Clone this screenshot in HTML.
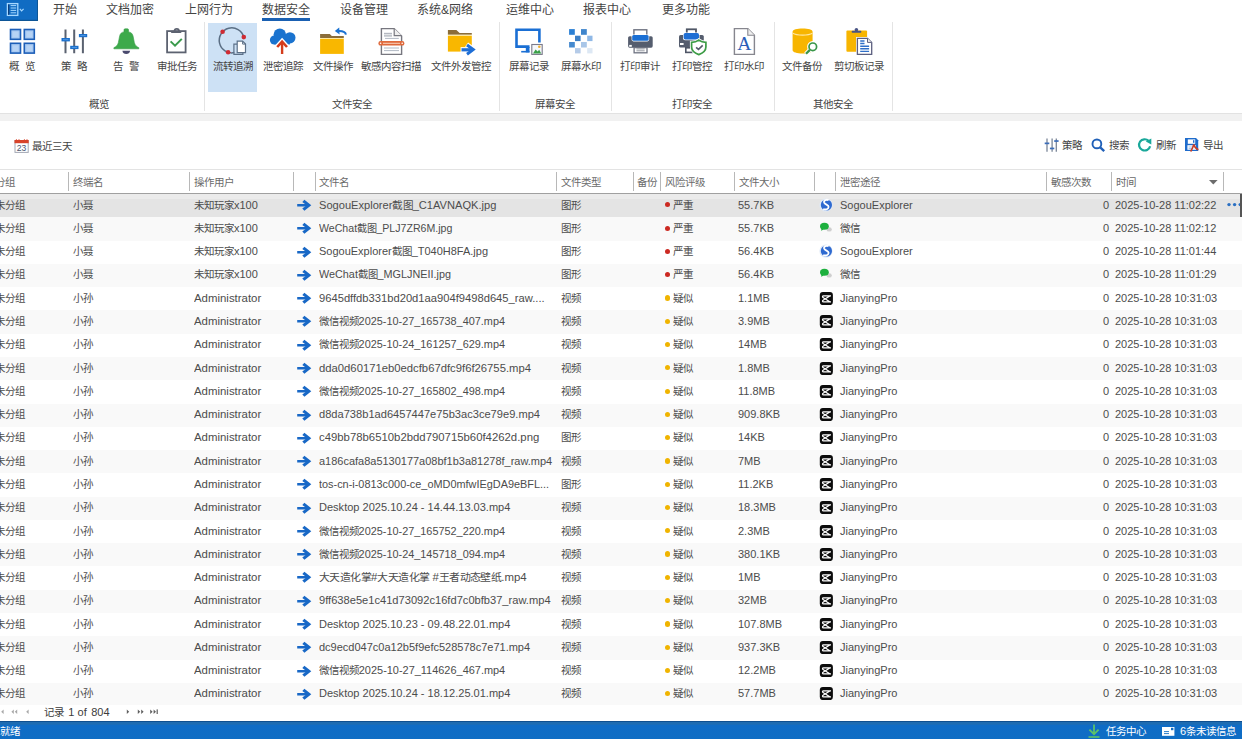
<!DOCTYPE html>
<html lang="zh-CN"><head><meta charset="utf-8"><title>数据安全</title>
<style>
*{margin:0;padding:0;box-sizing:border-box}
html,body{width:1242px;height:739px;overflow:hidden;background:#fff}
body{position:relative;font-family:"Liberation Sans",sans-serif;color:#3c3c3c;font-size:11px}
.abs{position:absolute}
.k{font-size:10.5px}
.mi .k{font-size:12px}
#app{position:absolute;left:0;top:0;width:38.2px;height:20.8px;background:#106cc3;box-shadow:inset -1px -1.2px 0 #0d5596}
.mi{position:absolute;top:0;height:20px;line-height:20px;font-size:12px;color:#444;white-space:nowrap}
#ul{position:absolute;left:262px;top:17.8px;width:48px;height:2.8px;background:#1a60b2}
#hl{position:absolute;left:208.3px;top:23px;width:48.5px;height:69px;background:#cde1f5}
.rb-i{position:absolute;line-height:0}
.rb-i svg{display:block}
.rb-l{position:absolute;top:59px;width:80px;text-align:center;font-size:11px;line-height:14px;color:#444;white-space:nowrap}
.grp{position:absolute;top:96.5px;width:120px;text-align:center;font-size:11px;line-height:14px;color:#444;white-space:nowrap}
.sep{position:absolute;top:22px;width:1px;height:89px;background:#e4e4e4}
#gbar{position:absolute;left:0;top:112.5px;width:1242px;height:8px;background:#f1f1f1;border-top:1px solid #e2e2e2}
#tb{position:absolute;left:0;top:120.5px;width:1242px;height:49px;background:#fff}
.tbt{position:absolute;top:138.8px;font-size:11px;line-height:14px;color:#444;white-space:nowrap}
#hdr{position:absolute;left:0;top:169px;width:1242px;height:24.5px;background:#fff;border-top:1px solid #e3e3e3}
#hdrb{position:absolute;left:0;top:192.6px;width:1242px;height:1.4px;background:#a0a0a0}
.hd{position:absolute;top:172px;width:1px;height:19px;background:#b8b8b8}
.ht{position:absolute;top:174.6px;font-size:11px;line-height:14px;color:#6a6a6a;white-space:nowrap}
.row{position:absolute;left:0;width:1242px;height:23.28px;background:#fff}
.row.alt{background:#f9f9f9}
.row.sel{background:linear-gradient(#ebebeb 0,#ebebeb 4.6px,#e4e4e4 4.6px)}
.c{position:absolute;top:-0.4px;line-height:23.28px;font-size:11px;color:#4c4c4c;white-space:nowrap}
.arw{position:absolute;left:294px;top:4px;line-height:0}
.dot{position:absolute;left:664.5px;top:8.3px;width:5.2px;height:5.2px;border-radius:50%}
.appi{position:absolute;left:819px;top:3.6px;line-height:0}
.ai{display:block}
.dots{position:absolute;left:1227px;top:9.6px;line-height:0}
.dots i{display:inline-block;width:3.4px;height:3.4px;border-radius:50%;background:#2a6fc2;margin-right:2.4px;vertical-align:top}
.rb{position:absolute;left:1240px;top:0;width:1.6px;height:100%;background:#555}
#pager{position:absolute;left:0;top:704.6px;width:1242px;height:16.4px;background:#fff}
.pg{position:absolute;top:0.5px;line-height:15px;font-size:11px;color:#3c3c3c;white-space:nowrap}
#status{position:absolute;left:0;top:720.8px;width:1242px;height:18.2px;background:linear-gradient(#0e4f90 0,#0e4f90 1px,#1e6cb2 1px,#1e6cb2 3.2px,#0f6cc6 4.2px,#0f6dc4 100%);color:#fff}
.st{position:absolute;top:1.5px;line-height:18px;font-size:11px;color:#fff;white-space:nowrap}
</style></head><body>
<div id="app"><svg width="38" height="20" viewBox="0 0 38 20" style="position:absolute;left:0;top:0"><rect x="7.4" y="3.6" width="10.4" height="11.8" fill="none" stroke="#a6d8ff" stroke-width="1.3"/><path d="M8.6 4.4V14.8" stroke="#0c3f7e" stroke-width="1.2"/><path d="M10.6 5.6H16.2M10.6 8H16.2M10.6 10.4H16.2M10.6 12.8H16.2" stroke="#a6d8ff" stroke-width="1"/><path d="M19.8 8.8L21.6 10.8L23.6 8.8" fill="none" stroke="#a6d8ff" stroke-width="1.2"/></svg></div>
<div class="mi" style="left:52.5px"><span class="k">开始</span></div><div class="mi" style="left:106px"><span class="k">文档加密</span></div><div class="mi" style="left:184.5px"><span class="k">上网行为</span></div><div class="mi" style="left:262px"><span class="k">数据安全</span></div><div class="mi" style="left:339.5px"><span class="k">设备管理</span></div><div class="mi" style="left:417px"><span class="k">系统</span>&amp;<span class="k">网络</span></div><div class="mi" style="left:505.5px"><span class="k">运维中心</span></div><div class="mi" style="left:582.5px"><span class="k">报表中心</span></div><div class="mi" style="left:661.5px"><span class="k">更多功能</span></div>
<div id="ul"></div>
<div id="hl"></div>
<div class="sep" style="left:204px"></div><div class="sep" style="left:499px"></div><div class="sep" style="left:611px"></div><div class="sep" style="left:774px"></div><div class="sep" style="left:892px"></div>
<svg class="abs" style="left:0;top:0" width="900" height="60" viewBox="0 0 900 60">
<g fill="#a7c9f2" stroke="#1d5fb8" stroke-width="1.6">
<rect x="10.5" y="29.5" width="10" height="9.8"/><rect x="24.3" y="29.5" width="10" height="9.8"/>
<rect x="10.5" y="43.3" width="10" height="9.8"/><rect x="24.3" y="43.3" width="10" height="9.8"/></g>
<g fill="#b6d3f5"><rect x="12.6" y="31.6" width="5.8" height="5.6"/><rect x="26.4" y="31.6" width="5.8" height="5.6"/><rect x="12.6" y="45.4" width="5.8" height="5.6"/><rect x="26.4" y="45.4" width="5.8" height="5.6"/></g>
<g stroke="#5a6270" stroke-width="2"><path d="M65.5 29.4V53.3M74.2 29.4V53.3M82.9 29.4V53.3"/></g>
<g fill="#1a6fcc"><rect x="61.5" y="38" width="8.4" height="3.4"/><rect x="70.2" y="45.8" width="8.3" height="3.3"/><rect x="78.9" y="34" width="8.3" height="3.2"/></g>
<g stroke="#6aa8ea" stroke-width="0.7"><path d="M63 39.7H68.4M71.7 47.45H77M80.4 35.6H85.7"/></g>
<path d="M124 31.9V29.8Q124 28.8 125.2 28.8H127.4Q128.5 28.8 128.5 29.8V31.9C131 32.1 132.5 33.6 133.1 36.2L134.3 42.4C134.9 45 136.4 46.6 138.8 47.7V48.8H113.9V47.7C116.3 46.6 117.8 45 118.4 42.4L119.6 36.2C120.2 33.6 121.6 32.1 124 31.9Z" fill="#3daa4b" stroke="#339a42" stroke-width="0.6"/>
<path d="M122.4 50.8H130.1C129.8 53 128.3 54 126.25 54C124.2 54 122.7 53 122.4 50.8Z" fill="#4a4a6e"/>
<rect x="167.1" y="31.1" width="18.5" height="21.3" fill="#fff" stroke="#5c6270" stroke-width="1.8"/>
<path d="M174.5 31.2A2.25 2.25 0 0 1 179 31.2" fill="none" stroke="#5c6270" stroke-width="1.7"/><rect x="170.9" y="30.8" width="10.6" height="2.2" rx="1" fill="#5c6270"/>
<path d="M170.6 41.4L175 45.6L181.8 38.9" fill="none" stroke="#3a9a4c" stroke-width="2"/>
<path d="M243.8 37.1A12.5 12.5 0 1 0 234.3 52.6" fill="none" stroke="#5a6e84" stroke-width="1.5"/>
<g fill="#cf2b33"><circle cx="222.6" cy="31.8" r="2.3"/><circle cx="243.8" cy="37.1" r="2.3"/><circle cx="228.1" cy="52.3" r="2.3"/></g>
<path d="M237.1 44.2H233.9V54.3H242.9V52.6" fill="none" stroke="#5c7088" stroke-width="1.2"/>
<path d="M237.2 41.2H242.6L245.5 44.1V52.6H237.2Z" fill="#fff" stroke="#5c7088" stroke-width="1.2"/>
<path d="M242.6 41.2V44.1H245.5" fill="none" stroke="#5c7088" stroke-width="1"/>
<g fill="#1a73cf"><circle cx="279.8" cy="34.6" r="6.2"/><circle cx="289.9" cy="37.8" r="5.6"/><circle cx="274.4" cy="40" r="4.5"/><rect x="274.4" y="37" width="15.5" height="7.5"/><rect x="279.8" y="34.6" width="10.1" height="5"/></g>
<path d="M276.6 47.4L282.1 41.4L287.6 47.4" fill="none" stroke="#fff" stroke-width="5"/>
<path d="M282.1 43V54" stroke="#fff" stroke-width="4.6"/>
<path d="M282.1 42.6V54" stroke="#d43c1c" stroke-width="2.4"/>
<path d="M277.2 47L282.1 41.6L287 47" fill="none" stroke="#d43c1c" stroke-width="2.6"/>
<path d="M320.1 33.9H329.8L331.8 36H343.8V38H320.1Z" fill="#8b6d3a"/>
<rect x="320.1" y="38" width="23.7" height="1" fill="#fde8a0"/>
<rect x="320.1" y="39" width="23.7" height="14.9" fill="#f9b700"/>
<path d="M345.9 34.6C345.6 31.9 343.4 30.8 338.6 30.9" fill="none" stroke="#1a72d2" stroke-width="2"/>
<path d="M334.8 31L339.2 27.6L339.6 34.6Z" fill="#1a72d2"/>
<path d="M381.4 28.6H394.2L401.6 36V54.4H381.4Z" fill="#fff" stroke="#77777f" stroke-width="1.4"/>
<path d="M394.2 28.6V35.6H401.6" fill="#eee" stroke="#77777f" stroke-width="1.2"/>
<g fill="#b4b8c0"><rect x="384" y="32.8" width="8" height="1.6"/><rect x="384" y="35.2" width="8" height="1.4"/></g>
<g stroke="#a8b0bc" stroke-width="0.9"><path d="M385 38.4H398.8M384 48H399M384 50.6H399"/></g>
<rect x="378.4" y="41" width="26" height="4.6" rx="2.2" fill="#e06a3c"/>
<path d="M383 43.3H400" stroke="#fbd2bc" stroke-width="1"/>
<g fill="#fff"><circle cx="380.6" cy="43.3" r="0.8"/><circle cx="402.2" cy="43.3" r="0.8"/></g>
<path d="M447.9 30H456.4L459.6 33H471.8V34.8H447.9Z" fill="#8b6d3a"/>
<rect x="447.9" y="34.8" width="23.9" height="1.2" fill="#fde8a0"/>
<rect x="447.9" y="36" width="23.9" height="15.6" fill="#f9b700"/>
<path d="M460.6 49.8H472.8" stroke="#fff" stroke-width="5.4"/>
<path d="M466.6 44.4L473.6 49.6L466.6 54.8" fill="none" stroke="#fff" stroke-width="5"/>
<path d="M461.5 49.8H472.4" stroke="#1e6ed6" stroke-width="3.2"/>
<path d="M467 45L473.2 49.6L467 54.2" fill="none" stroke="#1e6ed6" stroke-width="3"/>
<path d="M529.5 46.6H516.5V29.7H539.4V42.6" fill="none" stroke="#1a6fd4" stroke-width="2.6"/>
<rect x="525.8" y="47" width="3.7" height="5.4" fill="#1a6fd4"/>
<rect x="521.2" y="50.9" width="8.3" height="1.6" fill="#1a6fd4"/>
<rect x="531.8" y="44.5" width="10.4" height="9.9" fill="#f6f8fb" stroke="#7a7a8a" stroke-width="1.1"/>
<path d="M533 53.6L535.6 49.4L537.6 51.4L539.2 49.8L541.2 53.6Z" fill="#3aa048"/>
<circle cx="539.3" cy="46.8" r="1.3" fill="#f0b030"/>
<rect x="569.1" y="29.1" width="5.7" height="5.7" fill="#2a7fd4"/>
<rect x="581" y="29.1" width="5.8" height="5.7" fill="#3f85cc"/>
<rect x="575" y="35.7" width="5.6" height="5.4" fill="#3c7fc6"/>
<rect x="587.2" y="35.7" width="5.3" height="5.4" fill="#8fb8e6"/>
<rect x="569.1" y="42" width="5.7" height="5.5" fill="#4489cf"/>
<rect x="581" y="42" width="5.8" height="5.5" fill="#a9c6e8"/>
<rect x="575" y="48.1" width="5.6" height="5.3" fill="#b5cbe8"/>
<rect x="587.2" y="48.1" width="5.3" height="5.3" fill="#dde8f4"/>
<rect x="633.9" y="29.8" width="12.9" height="6" fill="#fff" stroke="#6e7280" stroke-width="1.4"/>
<rect x="628.1" y="36.2" width="24.6" height="11.5" rx="1.6" fill="#555d6e"/>
<rect x="631.6" y="34.4" width="17.6" height="7" rx="1.8" fill="#fff"/>
<rect x="632.2" y="34.9" width="16.4" height="5.9" rx="1.5" fill="#1a6fd4"/>
<rect x="629.2" y="44.9" width="2.6" height="1.9" fill="#fff"/>
<rect x="634.1" y="47.6" width="12.9" height="5.2" fill="#fff" stroke="#6e7280" stroke-width="1.3"/>
<path d="M636.4 48.9H644.7M636.4 50.8H644.7" stroke="#8a8e98" stroke-width="0.9"/>
<rect x="686.8" y="29.3" width="9.2" height="5" fill="#fff" stroke="#4f5666" stroke-width="1.8"/>
<rect x="679" y="35" width="24.8" height="12.5" rx="1.6" fill="#555d6e"/>
<rect x="683" y="32.5" width="16.6" height="7.8" rx="2" fill="#fff"/>
<rect x="683.6" y="33" width="15.4" height="6.6" rx="1.8" fill="#1f6fd4"/>
<rect x="680" y="43" width="3.6" height="2" fill="#fff"/>
<rect x="685.8" y="47.8" width="6.2" height="4.6" fill="#fff" stroke="#4f5666" stroke-width="1.6"/>
<path d="M698.8 40.1C701 41.8 703.2 42.4 705.9 42.4V47C705.9 51 702.6 53.2 698.8 54.6C695 53.2 691.6 51 691.6 47V42.4C694.4 42.4 696.6 41.8 698.8 40.1Z" fill="#fff" stroke="#fff" stroke-width="3.4"/>
<path d="M698.8 40.1C701 41.8 703.2 42.4 705.9 42.4V47C705.9 51 702.6 53.2 698.8 54.6C695 53.2 691.6 51 691.6 47V42.4C694.4 42.4 696.6 41.8 698.8 40.1Z" fill="#fff" stroke="#3d9c46" stroke-width="1.7"/>
<path d="M696.1 47.3L698.5 49.4L702.7 45.4" fill="none" stroke="#555a6a" stroke-width="1.6"/>
<path d="M734.4 28.6H747.8L754.4 35.2V54.4H734.4Z" fill="#fff" stroke="#86868e" stroke-width="1.4"/>
<path d="M747.8 28.6V35.2H754.4" fill="#eee" stroke="#86868e" stroke-width="1.1"/>
<text x="744.4" y="49.6" text-anchor="middle" font-family="Liberation Serif" font-size="19.5" fill="#2a5eb8">A</text>
<path d="M792.6 31.8C792.6 29.8 797 28.6 802.6 28.6C808.2 28.6 812.6 29.8 812.6 31.8V50.2C812.6 52.2 808.2 53.4 802.6 53.4C797 53.4 792.6 52.2 792.6 50.2Z" fill="#f7b500"/>
<path d="M792.8 33.2C795 34.6 798.5 35.1 802.6 35.1C806.7 35.1 810.2 34.6 812.4 33.2" fill="none" stroke="#ffe7a0" stroke-width="1.1"/>
<path d="M810 49.8L805.8 54" stroke="#fff" stroke-width="4.4"/>
<circle cx="812.8" cy="46.8" r="4.2" fill="#fff" stroke="#fff" stroke-width="3"/>
<circle cx="812.8" cy="46.8" r="3.8" fill="#fff" stroke="#3a964a" stroke-width="1.7"/>
<path d="M809.9 49.9L806 53.8" stroke="#3a964a" stroke-width="2.3"/>
<rect x="846.4" y="30.4" width="20.7" height="21.4" rx="1" fill="#f7b500"/>
<circle cx="856.4" cy="29.8" r="1.8" fill="#4a5585"/>
<rect x="851.7" y="30.8" width="9.6" height="2" rx="0.8" fill="#4a5585"/>
<path d="M857.4 38.3H867.5L871.7 42.4V54.4H857.4Z" fill="#fff" stroke="#fff" stroke-width="2.6"/>
<path d="M857.4 38.3H867.5L871.7 42.4V54.4H857.4Z" fill="#fff" stroke="#5c6080" stroke-width="1.3"/>
<path d="M867.5 38.3V42.4H871.7" fill="#eee" stroke="#5c6080" stroke-width="1"/>
<g stroke="#2f6fc8" stroke-width="1.4"><path d="M860.2 41H864.5M860.2 43.5H864.5M860.2 46.3H869.1M860.2 48.8H869.1M860.2 51.4H869.1"/></g>
</svg><div class="rb-l" style="left:-17.7px"><span class="k">概</span>&nbsp;&nbsp;<span class="k">览</span></div><div class="rb-l" style="left:34.2px"><span class="k">策</span>&nbsp;&nbsp;<span class="k">略</span></div><div class="rb-l" style="left:86.2px"><span class="k">告</span>&nbsp;&nbsp;<span class="k">警</span></div><div class="rb-l" style="left:136.5px"><span class="k">审批任务</span></div><div class="rb-l" style="left:192.5px"><span class="k">流转追溯</span></div><div class="rb-l" style="left:242.8px"><span class="k">泄密追踪</span></div><div class="rb-l" style="left:292.5px"><span class="k">文件操作</span></div><div class="rb-l" style="left:351.3px"><span class="k">敏感内容扫描</span></div><div class="rb-l" style="left:420.8px"><span class="k">文件外发管控</span></div><div class="rb-l" style="left:488.5px"><span class="k">屏幕记录</span></div><div class="rb-l" style="left:540.5px"><span class="k">屏幕水印</span></div><div class="rb-l" style="left:600.0px"><span class="k">打印审计</span></div><div class="rb-l" style="left:652.2px"><span class="k">打印管控</span></div><div class="rb-l" style="left:704.0px"><span class="k">打印水印</span></div><div class="rb-l" style="left:761.5px"><span class="k">文件备份</span></div><div class="rb-l" style="left:819.0px"><span class="k">剪切板记录</span></div>
<div class="grp" style="left:38.5px"><span class="k">概览</span></div><div class="grp" style="left:292px"><span class="k">文件安全</span></div><div class="grp" style="left:494.5px"><span class="k">屏幕安全</span></div><div class="grp" style="left:632px"><span class="k">打印安全</span></div><div class="grp" style="left:773px"><span class="k">其他安全</span></div>
<div id="gbar"></div>
<div id="tb"></div>
<svg class="abs" style="left:12px;top:136px" width="20" height="20" viewBox="12 136 20 20"><rect x="15" y="140.6" width="13.2" height="11.8" fill="#fff" stroke="#a4a8b4" stroke-width="1"/><rect x="14.5" y="140" width="14.2" height="3.2" fill="#d8432a"/><path d="M16.4 139.2V140.4M19 139.2V140.4M24.4 139.2V140.4M27 139.2V140.4" stroke="#d8432a" stroke-width="0.9"/><text x="21.6" y="151" text-anchor="middle" font-family="Liberation Sans" font-size="8.6" fill="#4a5470">23</text></svg>
<span class="tbt" style="left:32px"><span class="k">最近三天</span></span>
<svg class="abs" style="left:1040px;top:134px" width="170" height="22" viewBox="1040 134 170 22">
<g stroke="#7a8698" stroke-width="1.3"><path d="M1047 138.6V151.8M1052.1 138.6V151.8M1056.3 138.6V151.8"/></g>
<g fill="#3a6cb8"><rect x="1044.7" y="142.5" width="4.6" height="1.7"/><rect x="1049.9" y="147.6" width="4.4" height="1.7"/><rect x="1054.2" y="140.2" width="4.4" height="1.7"/></g>
<circle cx="1096.9" cy="143.9" r="4.4" fill="none" stroke="#2060b8" stroke-width="1.9"/>
<path d="M1100.2 147.3L1104.2 151.2" stroke="#2060b8" stroke-width="2.4"/>
<path d="M1148.6 140.9A5.6 5.6 0 1 0 1150.1 146.2" fill="none" stroke="#1aa89a" stroke-width="2.2"/>
<path d="M1145.8 141.6L1151.3 138.6L1151.3 144.6Z" fill="#1aa89a"/>
<path d="M1185 138H1196L1198.2 140.2V151H1185Z" fill="#1f6ccc"/>
<rect x="1187.8" y="139.4" width="7.4" height="4.4" fill="#fff"/>
<rect x="1193" y="140.2" width="1.4" height="2.6" fill="#1f6ccc"/>
<rect x="1187.4" y="145.2" width="8.6" height="4.6" fill="#fff"/>
<path d="M1188.6 147H1192.4M1188.6 148.6H1192" stroke="#8ab4e6" stroke-width="0.8"/>
<path d="M1190.6 151.4C1192 149.4 1193.2 147 1193.8 144.4C1194.4 146.8 1196 148.8 1198.4 149.8" fill="none" stroke="#c8402a" stroke-width="1.7"/>
</svg>
<span class="tbt" style="left:1062px;top:137.9px"><span class="k">策略</span></span>
<span class="tbt" style="left:1109px;top:137.9px"><span class="k">搜索</span></span>
<span class="tbt" style="left:1155.5px;top:137.9px"><span class="k">刷新</span></span>
<span class="tbt" style="left:1202.5px;top:137.9px"><span class="k">导出</span></span>
<div id="hdr"></div>
<div class="hd" style="left:68px"></div><div class="hd" style="left:189px"></div><div class="hd" style="left:293px"></div><div class="hd" style="left:315px"></div><div class="hd" style="left:556px"></div><div class="hd" style="left:633px"></div><div class="hd" style="left:660px"></div><div class="hd" style="left:734px"></div><div class="hd" style="left:814px"></div><div class="hd" style="left:835px"></div><div class="hd" style="left:1046px"></div><div class="hd" style="left:1111px"></div><div class="hd" style="left:1223px"></div>
<span class="ht" style="left:-5.5px"><span class="k">分组</span></span><span class="ht" style="left:72.5px"><span class="k">终端名</span></span><span class="ht" style="left:194px"><span class="k">操作用户</span></span><span class="ht" style="left:319px"><span class="k">文件名</span></span><span class="ht" style="left:561px"><span class="k">文件类型</span></span><span class="ht" style="left:637px"><span class="k">备份</span></span><span class="ht" style="left:664.5px"><span class="k">风险评级</span></span><span class="ht" style="left:738.5px"><span class="k">文件大小</span></span><span class="ht" style="left:840px"><span class="k">泄密途径</span></span><span class="ht" style="left:1050.5px"><span class="k">敏感次数</span></span><span class="ht" style="left:1115.5px"><span class="k">时间</span></span>
<div class="abs" style="left:1209px;top:179.6px;line-height:0"><svg width="9" height="5" viewBox="0 0 9 5"><path d="M0 0H8.6L4.3 4.6Z" fill="#6c6c6c"/></svg></div>
<div id="hdrb"></div>
<div class="row sel" style="top:194.00px"><span class="c" style="left:-5.5px"><span class="k">未分组</span></span><span class="c" style="left:72.5px"><span class="k">小聂</span></span><span class="c" style="left:194px"><span class="k">未知玩家</span>x100</span><span class="arw"><svg class="ar" width="18" height="14" viewBox="294 198 18 14"><rect x="297.2" y="204" width="10" height="2.5" fill="#1868c6"/><path d="M302.3 202L304.4 199.7L311.3 205.25L304.4 210.8L302.3 208.5L306.6 205.25Z" fill="#1868c6"/></svg></span><span class="c" style="left:319px;transform:scaleX(1.0091);transform-origin:0 0">SogouExplorer<span class="k">截图</span>_C1AVNAQK.jpg</span><span class="c" style="left:561px"><span class="k">图形</span></span><span class="dot" style="background:#cc2a22"></span><span class="c" style="left:673px"><span class="k">严重</span></span><span class="c" style="left:738px">55.7KB</span><span class="appi"><svg class="ai" width="14" height="14" viewBox="819 197.6 14 14"><circle cx="826" cy="204.6" r="6.6" fill="#dfe9f7"/><circle cx="826.4" cy="204.6" r="5.6" fill="#2f6ad0"/><path d="M828.6 199.8C826.6 198.8 823.4 199.8 824.2 202.2C825 204.4 828.8 204.2 828.6 206.6C828.4 209 825.2 209.6 823.2 208.6" fill="none" stroke="#fff" stroke-width="1.8"/></svg></span><span class="c" style="left:840px">SogouExplorer</span><span class="c" style="left:1103px">0</span><span class="c" style="left:1115px">2025-10-28 11:02:22</span><svg class="abs" style="left:1224px;top:6px" width="18" height="10" viewBox="1224 200 18 10"><g fill="#2a6fc2"><circle cx="1229" cy="204.6" r="1.7"/><circle cx="1234.6" cy="204.6" r="1.7"/><circle cx="1240.2" cy="204.6" r="1.7"/></g></svg><span class="rb"></span></div>
<div class="row alt" style="top:217.28px"><span class="c" style="left:-5.5px"><span class="k">未分组</span></span><span class="c" style="left:72.5px"><span class="k">小聂</span></span><span class="c" style="left:194px"><span class="k">未知玩家</span>x100</span><span class="arw"><svg class="ar" width="18" height="14" viewBox="294 198 18 14"><rect x="297.2" y="204" width="10" height="2.5" fill="#1868c6"/><path d="M302.3 202L304.4 199.7L311.3 205.25L304.4 210.8L302.3 208.5L306.6 205.25Z" fill="#1868c6"/></svg></span><span class="c" style="left:319px;transform:scaleX(0.9638);transform-origin:0 0">WeChat<span class="k">截图</span>_PLJ7ZR6M.jpg</span><span class="c" style="left:561px"><span class="k">图形</span></span><span class="dot" style="background:#cc2a22"></span><span class="c" style="left:673px"><span class="k">严重</span></span><span class="c" style="left:738px">55.7KB</span><span class="appi"><svg class="ai" width="14" height="14" viewBox="819 197.6 14 14"><ellipse cx="829.2" cy="206" rx="2.6" ry="2.2" fill="#cfcfcf"/><ellipse cx="824.4" cy="202.9" rx="4.4" ry="3.5" fill="#1db03e"/><path d="M821.6 205.2L821 207.4L823.8 206Z" fill="#1db03e"/></svg></span><span class="c" style="left:840px"><span class="k">微信</span></span><span class="c" style="left:1103px">0</span><span class="c" style="left:1115px">2025-10-28 11:02:12</span></div>
<div class="row" style="top:240.56px"><span class="c" style="left:-5.5px"><span class="k">未分组</span></span><span class="c" style="left:72.5px"><span class="k">小聂</span></span><span class="c" style="left:194px"><span class="k">未知玩家</span>x100</span><span class="arw"><svg class="ar" width="18" height="14" viewBox="294 198 18 14"><rect x="297.2" y="204" width="10" height="2.5" fill="#1868c6"/><path d="M302.3 202L304.4 199.7L311.3 205.25L304.4 210.8L302.3 208.5L306.6 205.25Z" fill="#1868c6"/></svg></span><span class="c" style="left:319px;transform:scaleX(0.9988);transform-origin:0 0">SogouExplorer<span class="k">截图</span>_T040H8FA.jpg</span><span class="c" style="left:561px"><span class="k">图形</span></span><span class="dot" style="background:#cc2a22"></span><span class="c" style="left:673px"><span class="k">严重</span></span><span class="c" style="left:738px">56.4KB</span><span class="appi"><svg class="ai" width="14" height="14" viewBox="819 197.6 14 14"><circle cx="826" cy="204.6" r="6.6" fill="#dfe9f7"/><circle cx="826.4" cy="204.6" r="5.6" fill="#2f6ad0"/><path d="M828.6 199.8C826.6 198.8 823.4 199.8 824.2 202.2C825 204.4 828.8 204.2 828.6 206.6C828.4 209 825.2 209.6 823.2 208.6" fill="none" stroke="#fff" stroke-width="1.8"/></svg></span><span class="c" style="left:840px">SogouExplorer</span><span class="c" style="left:1103px">0</span><span class="c" style="left:1115px">2025-10-28 11:01:44</span></div>
<div class="row alt" style="top:263.84px"><span class="c" style="left:-5.5px"><span class="k">未分组</span></span><span class="c" style="left:72.5px"><span class="k">小聂</span></span><span class="c" style="left:194px"><span class="k">未知玩家</span>x100</span><span class="arw"><svg class="ar" width="18" height="14" viewBox="294 198 18 14"><rect x="297.2" y="204" width="10" height="2.5" fill="#1868c6"/><path d="M302.3 202L304.4 199.7L311.3 205.25L304.4 210.8L302.3 208.5L306.6 205.25Z" fill="#1868c6"/></svg></span><span class="c" style="left:319px;transform:scaleX(0.9836);transform-origin:0 0">WeChat<span class="k">截图</span>_MGLJNEII.jpg</span><span class="c" style="left:561px"><span class="k">图形</span></span><span class="dot" style="background:#cc2a22"></span><span class="c" style="left:673px"><span class="k">严重</span></span><span class="c" style="left:738px">56.4KB</span><span class="appi"><svg class="ai" width="14" height="14" viewBox="819 197.6 14 14"><ellipse cx="829.2" cy="206" rx="2.6" ry="2.2" fill="#cfcfcf"/><ellipse cx="824.4" cy="202.9" rx="4.4" ry="3.5" fill="#1db03e"/><path d="M821.6 205.2L821 207.4L823.8 206Z" fill="#1db03e"/></svg></span><span class="c" style="left:840px"><span class="k">微信</span></span><span class="c" style="left:1103px">0</span><span class="c" style="left:1115px">2025-10-28 11:01:29</span></div>
<div class="row" style="top:287.12px"><span class="c" style="left:-5.5px"><span class="k">未分组</span></span><span class="c" style="left:72.5px"><span class="k">小孙</span></span><span class="c" style="left:194px;transform:scaleX(1.038);transform-origin:0 0">Administrator</span><span class="arw"><svg class="ar" width="18" height="14" viewBox="294 198 18 14"><rect x="297.2" y="204" width="10" height="2.5" fill="#1868c6"/><path d="M302.3 202L304.4 199.7L311.3 205.25L304.4 210.8L302.3 208.5L306.6 205.25Z" fill="#1868c6"/></svg></span><span class="c" style="left:319px;transform:scaleX(1.017);transform-origin:0 0">9645dffdb331bd20d1aa904f9498d645_raw....</span><span class="c" style="left:561px"><span class="k">视频</span></span><span class="dot" style="background:#f0b400"></span><span class="c" style="left:673px"><span class="k">疑似</span></span><span class="c" style="left:738px">1.1MB</span><span class="appi"><svg class="ai" width="14" height="14" viewBox="819 196.5 14 14"><rect x="819.8" y="197.6" width="13.1" height="13" rx="3" fill="#0c0c0c"/><path d="M831 201.4H823.6C822.2 201.4 822.2 202.6 823.4 203.3L829.8 207.3M831 207.4H823.6C822.2 207.4 822.2 206.2 823.4 205.5L829.8 201.5" stroke="#fff" stroke-width="1.3" fill="none"/></svg></span><span class="c" style="left:840px">JianyingPro</span><span class="c" style="left:1103px">0</span><span class="c" style="left:1115px">2025-10-28 10:31:03</span></div>
<div class="row alt" style="top:310.40px"><span class="c" style="left:-5.5px"><span class="k">未分组</span></span><span class="c" style="left:72.5px"><span class="k">小孙</span></span><span class="c" style="left:194px;transform:scaleX(1.038);transform-origin:0 0">Administrator</span><span class="arw"><svg class="ar" width="18" height="14" viewBox="294 198 18 14"><rect x="297.2" y="204" width="10" height="2.5" fill="#1868c6"/><path d="M302.3 202L304.4 199.7L311.3 205.25L304.4 210.8L302.3 208.5L306.6 205.25Z" fill="#1868c6"/></svg></span><span class="c" style="left:319px;transform:scaleX(0.9894);transform-origin:0 0"><span class="k">微信视频</span>2025-10-27_165738_407.mp4</span><span class="c" style="left:561px"><span class="k">视频</span></span><span class="dot" style="background:#f0b400"></span><span class="c" style="left:673px"><span class="k">疑似</span></span><span class="c" style="left:738px">3.9MB</span><span class="appi"><svg class="ai" width="14" height="14" viewBox="819 196.5 14 14"><rect x="819.8" y="197.6" width="13.1" height="13" rx="3" fill="#0c0c0c"/><path d="M831 201.4H823.6C822.2 201.4 822.2 202.6 823.4 203.3L829.8 207.3M831 207.4H823.6C822.2 207.4 822.2 206.2 823.4 205.5L829.8 201.5" stroke="#fff" stroke-width="1.3" fill="none"/></svg></span><span class="c" style="left:840px">JianyingPro</span><span class="c" style="left:1103px">0</span><span class="c" style="left:1115px">2025-10-28 10:31:03</span></div>
<div class="row" style="top:333.68px"><span class="c" style="left:-5.5px"><span class="k">未分组</span></span><span class="c" style="left:72.5px"><span class="k">小孙</span></span><span class="c" style="left:194px;transform:scaleX(1.038);transform-origin:0 0">Administrator</span><span class="arw"><svg class="ar" width="18" height="14" viewBox="294 198 18 14"><rect x="297.2" y="204" width="10" height="2.5" fill="#1868c6"/><path d="M302.3 202L304.4 199.7L311.3 205.25L304.4 210.8L302.3 208.5L306.6 205.25Z" fill="#1868c6"/></svg></span><span class="c" style="left:319px;transform:scaleX(0.9894);transform-origin:0 0"><span class="k">微信视频</span>2025-10-24_161257_629.mp4</span><span class="c" style="left:561px"><span class="k">视频</span></span><span class="dot" style="background:#f0b400"></span><span class="c" style="left:673px"><span class="k">疑似</span></span><span class="c" style="left:738px">14MB</span><span class="appi"><svg class="ai" width="14" height="14" viewBox="819 196.5 14 14"><rect x="819.8" y="197.6" width="13.1" height="13" rx="3" fill="#0c0c0c"/><path d="M831 201.4H823.6C822.2 201.4 822.2 202.6 823.4 203.3L829.8 207.3M831 207.4H823.6C822.2 207.4 822.2 206.2 823.4 205.5L829.8 201.5" stroke="#fff" stroke-width="1.3" fill="none"/></svg></span><span class="c" style="left:840px">JianyingPro</span><span class="c" style="left:1103px">0</span><span class="c" style="left:1115px">2025-10-28 10:31:03</span></div>
<div class="row alt" style="top:356.96px"><span class="c" style="left:-5.5px"><span class="k">未分组</span></span><span class="c" style="left:72.5px"><span class="k">小孙</span></span><span class="c" style="left:194px;transform:scaleX(1.038);transform-origin:0 0">Administrator</span><span class="arw"><svg class="ar" width="18" height="14" viewBox="294 198 18 14"><rect x="297.2" y="204" width="10" height="2.5" fill="#1868c6"/><path d="M302.3 202L304.4 199.7L311.3 205.25L304.4 210.8L302.3 208.5L306.6 205.25Z" fill="#1868c6"/></svg></span><span class="c" style="left:319px;transform:scaleX(1.0254);transform-origin:0 0">dda0d60171eb0edcfb67dfc9f6f26755.mp4</span><span class="c" style="left:561px"><span class="k">视频</span></span><span class="dot" style="background:#f0b400"></span><span class="c" style="left:673px"><span class="k">疑似</span></span><span class="c" style="left:738px">1.8MB</span><span class="appi"><svg class="ai" width="14" height="14" viewBox="819 196.5 14 14"><rect x="819.8" y="197.6" width="13.1" height="13" rx="3" fill="#0c0c0c"/><path d="M831 201.4H823.6C822.2 201.4 822.2 202.6 823.4 203.3L829.8 207.3M831 207.4H823.6C822.2 207.4 822.2 206.2 823.4 205.5L829.8 201.5" stroke="#fff" stroke-width="1.3" fill="none"/></svg></span><span class="c" style="left:840px">JianyingPro</span><span class="c" style="left:1103px">0</span><span class="c" style="left:1115px">2025-10-28 10:31:03</span></div>
<div class="row" style="top:380.24px"><span class="c" style="left:-5.5px"><span class="k">未分组</span></span><span class="c" style="left:72.5px"><span class="k">小孙</span></span><span class="c" style="left:194px;transform:scaleX(1.038);transform-origin:0 0">Administrator</span><span class="arw"><svg class="ar" width="18" height="14" viewBox="294 198 18 14"><rect x="297.2" y="204" width="10" height="2.5" fill="#1868c6"/><path d="M302.3 202L304.4 199.7L311.3 205.25L304.4 210.8L302.3 208.5L306.6 205.25Z" fill="#1868c6"/></svg></span><span class="c" style="left:319px;transform:scaleX(0.9894);transform-origin:0 0"><span class="k">微信视频</span>2025-10-27_165802_498.mp4</span><span class="c" style="left:561px"><span class="k">视频</span></span><span class="dot" style="background:#f0b400"></span><span class="c" style="left:673px"><span class="k">疑似</span></span><span class="c" style="left:738px">11.8MB</span><span class="appi"><svg class="ai" width="14" height="14" viewBox="819 196.5 14 14"><rect x="819.8" y="197.6" width="13.1" height="13" rx="3" fill="#0c0c0c"/><path d="M831 201.4H823.6C822.2 201.4 822.2 202.6 823.4 203.3L829.8 207.3M831 207.4H823.6C822.2 207.4 822.2 206.2 823.4 205.5L829.8 201.5" stroke="#fff" stroke-width="1.3" fill="none"/></svg></span><span class="c" style="left:840px">JianyingPro</span><span class="c" style="left:1103px">0</span><span class="c" style="left:1115px">2025-10-28 10:31:03</span></div>
<div class="row alt" style="top:403.52px"><span class="c" style="left:-5.5px"><span class="k">未分组</span></span><span class="c" style="left:72.5px"><span class="k">小孙</span></span><span class="c" style="left:194px;transform:scaleX(1.038);transform-origin:0 0">Administrator</span><span class="arw"><svg class="ar" width="18" height="14" viewBox="294 198 18 14"><rect x="297.2" y="204" width="10" height="2.5" fill="#1868c6"/><path d="M302.3 202L304.4 199.7L311.3 205.25L304.4 210.8L302.3 208.5L306.6 205.25Z" fill="#1868c6"/></svg></span><span class="c" style="left:319px;transform:scaleX(1.0091);transform-origin:0 0">d8da738b1ad6457447e75b3ac3ce79e9.mp4</span><span class="c" style="left:561px"><span class="k">视频</span></span><span class="dot" style="background:#f0b400"></span><span class="c" style="left:673px"><span class="k">疑似</span></span><span class="c" style="left:738px">909.8KB</span><span class="appi"><svg class="ai" width="14" height="14" viewBox="819 196.5 14 14"><rect x="819.8" y="197.6" width="13.1" height="13" rx="3" fill="#0c0c0c"/><path d="M831 201.4H823.6C822.2 201.4 822.2 202.6 823.4 203.3L829.8 207.3M831 207.4H823.6C822.2 207.4 822.2 206.2 823.4 205.5L829.8 201.5" stroke="#fff" stroke-width="1.3" fill="none"/></svg></span><span class="c" style="left:840px">JianyingPro</span><span class="c" style="left:1103px">0</span><span class="c" style="left:1115px">2025-10-28 10:31:03</span></div>
<div class="row" style="top:426.80px"><span class="c" style="left:-5.5px"><span class="k">未分组</span></span><span class="c" style="left:72.5px"><span class="k">小孙</span></span><span class="c" style="left:194px;transform:scaleX(1.038);transform-origin:0 0">Administrator</span><span class="arw"><svg class="ar" width="18" height="14" viewBox="294 198 18 14"><rect x="297.2" y="204" width="10" height="2.5" fill="#1868c6"/><path d="M302.3 202L304.4 199.7L311.3 205.25L304.4 210.8L302.3 208.5L306.6 205.25Z" fill="#1868c6"/></svg></span><span class="c" style="left:319px;transform:scaleX(1.0317);transform-origin:0 0">c49bb78b6510b2bdd790715b60f4262d.png</span><span class="c" style="left:561px"><span class="k">图形</span></span><span class="dot" style="background:#f0b400"></span><span class="c" style="left:673px"><span class="k">疑似</span></span><span class="c" style="left:738px">14KB</span><span class="appi"><svg class="ai" width="14" height="14" viewBox="819 196.5 14 14"><rect x="819.8" y="197.6" width="13.1" height="13" rx="3" fill="#0c0c0c"/><path d="M831 201.4H823.6C822.2 201.4 822.2 202.6 823.4 203.3L829.8 207.3M831 207.4H823.6C822.2 207.4 822.2 206.2 823.4 205.5L829.8 201.5" stroke="#fff" stroke-width="1.3" fill="none"/></svg></span><span class="c" style="left:840px">JianyingPro</span><span class="c" style="left:1103px">0</span><span class="c" style="left:1115px">2025-10-28 10:31:03</span></div>
<div class="row alt" style="top:450.08px"><span class="c" style="left:-5.5px"><span class="k">未分组</span></span><span class="c" style="left:72.5px"><span class="k">小孙</span></span><span class="c" style="left:194px;transform:scaleX(1.038);transform-origin:0 0">Administrator</span><span class="arw"><svg class="ar" width="18" height="14" viewBox="294 198 18 14"><rect x="297.2" y="204" width="10" height="2.5" fill="#1868c6"/><path d="M302.3 202L304.4 199.7L311.3 205.25L304.4 210.8L302.3 208.5L306.6 205.25Z" fill="#1868c6"/></svg></span><span class="c" style="left:319px;transform:scaleX(0.9979);transform-origin:0 0">a186cafa8a5130177a08bf1b3a81278f_raw.mp4</span><span class="c" style="left:561px"><span class="k">视频</span></span><span class="dot" style="background:#f0b400"></span><span class="c" style="left:673px"><span class="k">疑似</span></span><span class="c" style="left:738px">7MB</span><span class="appi"><svg class="ai" width="14" height="14" viewBox="819 196.5 14 14"><rect x="819.8" y="197.6" width="13.1" height="13" rx="3" fill="#0c0c0c"/><path d="M831 201.4H823.6C822.2 201.4 822.2 202.6 823.4 203.3L829.8 207.3M831 207.4H823.6C822.2 207.4 822.2 206.2 823.4 205.5L829.8 201.5" stroke="#fff" stroke-width="1.3" fill="none"/></svg></span><span class="c" style="left:840px">JianyingPro</span><span class="c" style="left:1103px">0</span><span class="c" style="left:1115px">2025-10-28 10:31:03</span></div>
<div class="row" style="top:473.36px"><span class="c" style="left:-5.5px"><span class="k">未分组</span></span><span class="c" style="left:72.5px"><span class="k">小孙</span></span><span class="c" style="left:194px;transform:scaleX(1.038);transform-origin:0 0">Administrator</span><span class="arw"><svg class="ar" width="18" height="14" viewBox="294 198 18 14"><rect x="297.2" y="204" width="10" height="2.5" fill="#1868c6"/><path d="M302.3 202L304.4 199.7L311.3 205.25L304.4 210.8L302.3 208.5L306.6 205.25Z" fill="#1868c6"/></svg></span><span class="c" style="left:319px;transform:scaleX(0.9905);transform-origin:0 0">tos-cn-i-0813c000-ce_oMD0mfwIEgDA9eBFL...</span><span class="c" style="left:561px"><span class="k">图形</span></span><span class="dot" style="background:#f0b400"></span><span class="c" style="left:673px"><span class="k">疑似</span></span><span class="c" style="left:738px">11.2KB</span><span class="appi"><svg class="ai" width="14" height="14" viewBox="819 196.5 14 14"><rect x="819.8" y="197.6" width="13.1" height="13" rx="3" fill="#0c0c0c"/><path d="M831 201.4H823.6C822.2 201.4 822.2 202.6 823.4 203.3L829.8 207.3M831 207.4H823.6C822.2 207.4 822.2 206.2 823.4 205.5L829.8 201.5" stroke="#fff" stroke-width="1.3" fill="none"/></svg></span><span class="c" style="left:840px">JianyingPro</span><span class="c" style="left:1103px">0</span><span class="c" style="left:1115px">2025-10-28 10:31:03</span></div>
<div class="row alt" style="top:496.64px"><span class="c" style="left:-5.5px"><span class="k">未分组</span></span><span class="c" style="left:72.5px"><span class="k">小孙</span></span><span class="c" style="left:194px;transform:scaleX(1.038);transform-origin:0 0">Administrator</span><span class="arw"><svg class="ar" width="18" height="14" viewBox="294 198 18 14"><rect x="297.2" y="204" width="10" height="2.5" fill="#1868c6"/><path d="M302.3 202L304.4 199.7L311.3 205.25L304.4 210.8L302.3 208.5L306.6 205.25Z" fill="#1868c6"/></svg></span><span class="c" style="left:319px;transform:scaleX(1.0031);transform-origin:0 0">Desktop 2025.10.24 - 14.44.13.03.mp4</span><span class="c" style="left:561px"><span class="k">视频</span></span><span class="dot" style="background:#f0b400"></span><span class="c" style="left:673px"><span class="k">疑似</span></span><span class="c" style="left:738px">18.3MB</span><span class="appi"><svg class="ai" width="14" height="14" viewBox="819 196.5 14 14"><rect x="819.8" y="197.6" width="13.1" height="13" rx="3" fill="#0c0c0c"/><path d="M831 201.4H823.6C822.2 201.4 822.2 202.6 823.4 203.3L829.8 207.3M831 207.4H823.6C822.2 207.4 822.2 206.2 823.4 205.5L829.8 201.5" stroke="#fff" stroke-width="1.3" fill="none"/></svg></span><span class="c" style="left:840px">JianyingPro</span><span class="c" style="left:1103px">0</span><span class="c" style="left:1115px">2025-10-28 10:31:03</span></div>
<div class="row" style="top:519.92px"><span class="c" style="left:-5.5px"><span class="k">未分组</span></span><span class="c" style="left:72.5px"><span class="k">小孙</span></span><span class="c" style="left:194px;transform:scaleX(1.038);transform-origin:0 0">Administrator</span><span class="arw"><svg class="ar" width="18" height="14" viewBox="294 198 18 14"><rect x="297.2" y="204" width="10" height="2.5" fill="#1868c6"/><path d="M302.3 202L304.4 199.7L311.3 205.25L304.4 210.8L302.3 208.5L306.6 205.25Z" fill="#1868c6"/></svg></span><span class="c" style="left:319px;transform:scaleX(0.9894);transform-origin:0 0"><span class="k">微信视频</span>2025-10-27_165752_220.mp4</span><span class="c" style="left:561px"><span class="k">视频</span></span><span class="dot" style="background:#f0b400"></span><span class="c" style="left:673px"><span class="k">疑似</span></span><span class="c" style="left:738px">2.3MB</span><span class="appi"><svg class="ai" width="14" height="14" viewBox="819 196.5 14 14"><rect x="819.8" y="197.6" width="13.1" height="13" rx="3" fill="#0c0c0c"/><path d="M831 201.4H823.6C822.2 201.4 822.2 202.6 823.4 203.3L829.8 207.3M831 207.4H823.6C822.2 207.4 822.2 206.2 823.4 205.5L829.8 201.5" stroke="#fff" stroke-width="1.3" fill="none"/></svg></span><span class="c" style="left:840px">JianyingPro</span><span class="c" style="left:1103px">0</span><span class="c" style="left:1115px">2025-10-28 10:31:03</span></div>
<div class="row alt" style="top:543.20px"><span class="c" style="left:-5.5px"><span class="k">未分组</span></span><span class="c" style="left:72.5px"><span class="k">小孙</span></span><span class="c" style="left:194px;transform:scaleX(1.038);transform-origin:0 0">Administrator</span><span class="arw"><svg class="ar" width="18" height="14" viewBox="294 198 18 14"><rect x="297.2" y="204" width="10" height="2.5" fill="#1868c6"/><path d="M302.3 202L304.4 199.7L311.3 205.25L304.4 210.8L302.3 208.5L306.6 205.25Z" fill="#1868c6"/></svg></span><span class="c" style="left:319px;transform:scaleX(0.9894);transform-origin:0 0"><span class="k">微信视频</span>2025-10-24_145718_094.mp4</span><span class="c" style="left:561px"><span class="k">视频</span></span><span class="dot" style="background:#f0b400"></span><span class="c" style="left:673px"><span class="k">疑似</span></span><span class="c" style="left:738px">380.1KB</span><span class="appi"><svg class="ai" width="14" height="14" viewBox="819 196.5 14 14"><rect x="819.8" y="197.6" width="13.1" height="13" rx="3" fill="#0c0c0c"/><path d="M831 201.4H823.6C822.2 201.4 822.2 202.6 823.4 203.3L829.8 207.3M831 207.4H823.6C822.2 207.4 822.2 206.2 823.4 205.5L829.8 201.5" stroke="#fff" stroke-width="1.3" fill="none"/></svg></span><span class="c" style="left:840px">JianyingPro</span><span class="c" style="left:1103px">0</span><span class="c" style="left:1115px">2025-10-28 10:31:03</span></div>
<div class="row" style="top:566.48px"><span class="c" style="left:-5.5px"><span class="k">未分组</span></span><span class="c" style="left:72.5px"><span class="k">小孙</span></span><span class="c" style="left:194px;transform:scaleX(1.038);transform-origin:0 0">Administrator</span><span class="arw"><svg class="ar" width="18" height="14" viewBox="294 198 18 14"><rect x="297.2" y="204" width="10" height="2.5" fill="#1868c6"/><path d="M302.3 202L304.4 199.7L311.3 205.25L304.4 210.8L302.3 208.5L306.6 205.25Z" fill="#1868c6"/></svg></span><span class="c" style="left:319px;transform:scaleX(1.0395);transform-origin:0 0"><span class="k">大天造化掌</span>#<span class="k">大天造化掌</span> #<span class="k">王者动态壁纸</span>.mp4</span><span class="c" style="left:561px"><span class="k">视频</span></span><span class="dot" style="background:#f0b400"></span><span class="c" style="left:673px"><span class="k">疑似</span></span><span class="c" style="left:738px">1MB</span><span class="appi"><svg class="ai" width="14" height="14" viewBox="819 196.5 14 14"><rect x="819.8" y="197.6" width="13.1" height="13" rx="3" fill="#0c0c0c"/><path d="M831 201.4H823.6C822.2 201.4 822.2 202.6 823.4 203.3L829.8 207.3M831 207.4H823.6C822.2 207.4 822.2 206.2 823.4 205.5L829.8 201.5" stroke="#fff" stroke-width="1.3" fill="none"/></svg></span><span class="c" style="left:840px">JianyingPro</span><span class="c" style="left:1103px">0</span><span class="c" style="left:1115px">2025-10-28 10:31:03</span></div>
<div class="row alt" style="top:589.76px"><span class="c" style="left:-5.5px"><span class="k">未分组</span></span><span class="c" style="left:72.5px"><span class="k">小孙</span></span><span class="c" style="left:194px;transform:scaleX(1.038);transform-origin:0 0">Administrator</span><span class="arw"><svg class="ar" width="18" height="14" viewBox="294 198 18 14"><rect x="297.2" y="204" width="10" height="2.5" fill="#1868c6"/><path d="M302.3 202L304.4 199.7L311.3 205.25L304.4 210.8L302.3 208.5L306.6 205.25Z" fill="#1868c6"/></svg></span><span class="c" style="left:319px;transform:scaleX(1.0105);transform-origin:0 0">9ff638e5e1c41d73092c16fd7c0bfb37_raw.mp4</span><span class="c" style="left:561px"><span class="k">视频</span></span><span class="dot" style="background:#f0b400"></span><span class="c" style="left:673px"><span class="k">疑似</span></span><span class="c" style="left:738px">32MB</span><span class="appi"><svg class="ai" width="14" height="14" viewBox="819 196.5 14 14"><rect x="819.8" y="197.6" width="13.1" height="13" rx="3" fill="#0c0c0c"/><path d="M831 201.4H823.6C822.2 201.4 822.2 202.6 823.4 203.3L829.8 207.3M831 207.4H823.6C822.2 207.4 822.2 206.2 823.4 205.5L829.8 201.5" stroke="#fff" stroke-width="1.3" fill="none"/></svg></span><span class="c" style="left:840px">JianyingPro</span><span class="c" style="left:1103px">0</span><span class="c" style="left:1115px">2025-10-28 10:31:03</span></div>
<div class="row" style="top:613.04px"><span class="c" style="left:-5.5px"><span class="k">未分组</span></span><span class="c" style="left:72.5px"><span class="k">小孙</span></span><span class="c" style="left:194px;transform:scaleX(1.038);transform-origin:0 0">Administrator</span><span class="arw"><svg class="ar" width="18" height="14" viewBox="294 198 18 14"><rect x="297.2" y="204" width="10" height="2.5" fill="#1868c6"/><path d="M302.3 202L304.4 199.7L311.3 205.25L304.4 210.8L302.3 208.5L306.6 205.25Z" fill="#1868c6"/></svg></span><span class="c" style="left:319px;transform:scaleX(1.0031);transform-origin:0 0">Desktop 2025.10.23 - 09.48.22.01.mp4</span><span class="c" style="left:561px"><span class="k">视频</span></span><span class="dot" style="background:#f0b400"></span><span class="c" style="left:673px"><span class="k">疑似</span></span><span class="c" style="left:738px">107.8MB</span><span class="appi"><svg class="ai" width="14" height="14" viewBox="819 196.5 14 14"><rect x="819.8" y="197.6" width="13.1" height="13" rx="3" fill="#0c0c0c"/><path d="M831 201.4H823.6C822.2 201.4 822.2 202.6 823.4 203.3L829.8 207.3M831 207.4H823.6C822.2 207.4 822.2 206.2 823.4 205.5L829.8 201.5" stroke="#fff" stroke-width="1.3" fill="none"/></svg></span><span class="c" style="left:840px">JianyingPro</span><span class="c" style="left:1103px">0</span><span class="c" style="left:1115px">2025-10-28 10:31:03</span></div>
<div class="row alt" style="top:636.32px"><span class="c" style="left:-5.5px"><span class="k">未分组</span></span><span class="c" style="left:72.5px"><span class="k">小孙</span></span><span class="c" style="left:194px;transform:scaleX(1.038);transform-origin:0 0">Administrator</span><span class="arw"><svg class="ar" width="18" height="14" viewBox="294 198 18 14"><rect x="297.2" y="204" width="10" height="2.5" fill="#1868c6"/><path d="M302.3 202L304.4 199.7L311.3 205.25L304.4 210.8L302.3 208.5L306.6 205.25Z" fill="#1868c6"/></svg></span><span class="c" style="left:319px;transform:scaleX(1.0005);transform-origin:0 0">dc9ecd047c0a12b5f9efc528578c7e71.mp4</span><span class="c" style="left:561px"><span class="k">视频</span></span><span class="dot" style="background:#f0b400"></span><span class="c" style="left:673px"><span class="k">疑似</span></span><span class="c" style="left:738px">937.3KB</span><span class="appi"><svg class="ai" width="14" height="14" viewBox="819 196.5 14 14"><rect x="819.8" y="197.6" width="13.1" height="13" rx="3" fill="#0c0c0c"/><path d="M831 201.4H823.6C822.2 201.4 822.2 202.6 823.4 203.3L829.8 207.3M831 207.4H823.6C822.2 207.4 822.2 206.2 823.4 205.5L829.8 201.5" stroke="#fff" stroke-width="1.3" fill="none"/></svg></span><span class="c" style="left:840px">JianyingPro</span><span class="c" style="left:1103px">0</span><span class="c" style="left:1115px">2025-10-28 10:31:03</span></div>
<div class="row" style="top:659.60px"><span class="c" style="left:-5.5px"><span class="k">未分组</span></span><span class="c" style="left:72.5px"><span class="k">小孙</span></span><span class="c" style="left:194px;transform:scaleX(1.038);transform-origin:0 0">Administrator</span><span class="arw"><svg class="ar" width="18" height="14" viewBox="294 198 18 14"><rect x="297.2" y="204" width="10" height="2.5" fill="#1868c6"/><path d="M302.3 202L304.4 199.7L311.3 205.25L304.4 210.8L302.3 208.5L306.6 205.25Z" fill="#1868c6"/></svg></span><span class="c" style="left:319px;transform:scaleX(0.9947);transform-origin:0 0"><span class="k">微信视频</span>2025-10-27_114626_467.mp4</span><span class="c" style="left:561px"><span class="k">视频</span></span><span class="dot" style="background:#f0b400"></span><span class="c" style="left:673px"><span class="k">疑似</span></span><span class="c" style="left:738px">12.2MB</span><span class="appi"><svg class="ai" width="14" height="14" viewBox="819 196.5 14 14"><rect x="819.8" y="197.6" width="13.1" height="13" rx="3" fill="#0c0c0c"/><path d="M831 201.4H823.6C822.2 201.4 822.2 202.6 823.4 203.3L829.8 207.3M831 207.4H823.6C822.2 207.4 822.2 206.2 823.4 205.5L829.8 201.5" stroke="#fff" stroke-width="1.3" fill="none"/></svg></span><span class="c" style="left:840px">JianyingPro</span><span class="c" style="left:1103px">0</span><span class="c" style="left:1115px">2025-10-28 10:31:03</span></div>
<div class="row alt" style="top:682.88px"><span class="c" style="left:-5.5px"><span class="k">未分组</span></span><span class="c" style="left:72.5px"><span class="k">小孙</span></span><span class="c" style="left:194px;transform:scaleX(1.038);transform-origin:0 0">Administrator</span><span class="arw"><svg class="ar" width="18" height="14" viewBox="294 198 18 14"><rect x="297.2" y="204" width="10" height="2.5" fill="#1868c6"/><path d="M302.3 202L304.4 199.7L311.3 205.25L304.4 210.8L302.3 208.5L306.6 205.25Z" fill="#1868c6"/></svg></span><span class="c" style="left:319px;transform:scaleX(1.0031);transform-origin:0 0">Desktop 2025.10.24 - 18.12.25.01.mp4</span><span class="c" style="left:561px"><span class="k">视频</span></span><span class="dot" style="background:#f0b400"></span><span class="c" style="left:673px"><span class="k">疑似</span></span><span class="c" style="left:738px">57.7MB</span><span class="appi"><svg class="ai" width="14" height="14" viewBox="819 196.5 14 14"><rect x="819.8" y="197.6" width="13.1" height="13" rx="3" fill="#0c0c0c"/><path d="M831 201.4H823.6C822.2 201.4 822.2 202.6 823.4 203.3L829.8 207.3M831 207.4H823.6C822.2 207.4 822.2 206.2 823.4 205.5L829.8 201.5" stroke="#fff" stroke-width="1.3" fill="none"/></svg></span><span class="c" style="left:840px">JianyingPro</span><span class="c" style="left:1103px">0</span><span class="c" style="left:1115px">2025-10-28 10:31:03</span></div>
<div id="pager">
<svg class="abs" style="left:0;top:0" width="170" height="16" viewBox="0 704.6 170 16"><g fill="#a8a8a8"><path d="M3.6 709L1.2 711.3L3.6 713.6Z"/><path d="M13.8 709L11.4 711.3L13.8 713.6Z M17.2 709L14.8 711.3L17.2 713.6Z"/><path d="M28.6 709L26.2 711.3L28.6 713.6Z"/></g><g fill="#606060"><path d="M126.8 709L129.2 711.3L126.8 713.6Z"/><path d="M137.8 709L140.2 711.3L137.8 713.6Z M141.2 709L143.6 711.3L141.2 713.6Z"/><path d="M150.2 709L152.6 711.3L150.2 713.6Z M153.6 709L156 711.3L153.6 713.6Z"/><rect x="156.6" y="709" width="1.2" height="4.6"/></g></svg>
<span class="pg" style="left:43.6px"><span class="k"><span class="k">记录</span></span></span><span class="pg" style="left:68.2px">1</span><span class="pg" style="left:77.6px">of</span><span class="pg" style="left:91.2px">804</span></div>
<div id="status">
<span class="st" style="left:0"><span class="k">就绪</span></span>
<svg class="abs" style="left:1088px;top:3px" width="12" height="14" viewBox="0 0 12 14"><path d="M6 0.5V10M1.4 5.6L6 10.2L10.6 5.6" fill="none" stroke="#5cc26a" stroke-width="1.8"/><path d="M0.5 13H11.5" stroke="#5cc26a" stroke-width="1.6"/></svg>
<span class="st" style="left:1106px"><span class="k">任务中心</span></span>
<svg class="abs" style="left:1161.5px;top:5.8px" width="13" height="9" viewBox="0 0 13 9"><rect x="0" y="0" width="12.4" height="8.8" fill="#fff"/><path d="M2 4.6H7M2 6.6H7" stroke="#0f6dc4" stroke-width="0.9"/><rect x="9" y="0.8" width="2.4" height="2.4" fill="#0f6dc4"/></svg>
<span class="st" style="left:1180px">6<span class="k">条未读信息</span></span>
</div>
</body></html>
